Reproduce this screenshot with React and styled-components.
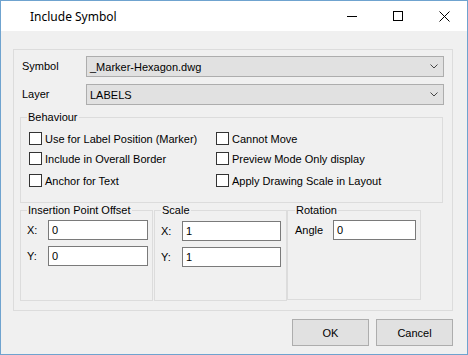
import React from "react";
import styled, { createGlobalStyle } from "styled-components";

const Global = createGlobalStyle`
  html, body { margin: 0; padding: 0; background: #fff; }
  * { box-sizing: border-box; }
`;

const Window = styled.div`
  width: 468px;
  height: 355px;
  border: 1px solid #6fa3cf;
  background: #f0f0f0;
  display: flex;
  flex-direction: column;
  font-family: "Liberation Sans", Arial, sans-serif;
  font-size: 11px;
  color: #000;
`;

const TitleBar = styled.div`
  height: 30px;
  background: #fff;
  display: flex;
  align-items: center;
  flex-shrink: 0;
`;

const Title = styled.div`
  flex: 1;
  padding-left: 29px;
  font-family: "Noto Sans", "Liberation Sans", sans-serif;
  font-size: 12px;
  color: #000;
`;

const CaptionButton = styled.div`
  width: 46px;
  height: 30px;
  display: flex;
  align-items: center;
  justify-content: center;
`;

const Body = styled.div`
  flex: 1;
  padding: 18px 14px 0 12px;
  display: flex;
  flex-direction: column;
`;

const Panel = styled.div`
  height: 262px;
  border: 1px solid #dcdcdc;
  padding: 6px 8px 0 6px;
  display: flex;
  flex-direction: column;
`;

const FieldRow = styled.div`
  display: grid;
  grid-template-columns: 64px 1fr;
  align-items: center;
  padding-left: 2px;
  margin-top: ${(p) => p.$mt || 0}px;
`;

const Label = styled.span`
  line-height: 13px;
  white-space: nowrap;
`;

const Combo = styled.div`
  height: 21px;
  border: 1px solid #adadad;
  background: #e1e1e1;
  display: flex;
  align-items: center;
  padding: 0 5px 0 3px;
`;

const ComboText = styled.span`
  flex: 1;
`;

const Group = styled.fieldset`
  margin: ${(p) => p.$margin || "0"};
  padding: ${(p) => p.$padding || "0"};
  border: 1px solid #dcdcdc;
  width: ${(p) => (p.$width ? p.$width + "px" : "auto")};
  height: ${(p) => p.$height}px;
  min-width: 0;
`;

const Legend = styled.legend`
  padding: 0 1px;
  margin-left: ${(p) => p.$shift || 0}px;
  line-height: 13px;
  font-size: 11px;
`;

const CheckGrid = styled.div`
  display: grid;
  grid-template-columns: 187px 1fr;
  grid-template-rows: 20px 22px 13px;
  align-items: start;
`;

const CheckItem = styled.label`
  display: flex;
  align-items: center;
  height: 13px;
  white-space: nowrap;
`;

const Box = styled.span`
  width: 13px;
  height: 13px;
  border: 1px solid #333;
  background: #fff;
  flex-shrink: 0;
  margin-right: 3px;
`;

const BottomRow = styled.div`
  display: flex;
  margin-top: 1px;
`;

const InputGrid = styled.div`
  display: grid;
  grid-template-columns: ${(p) => p.$labelWidth}px ${(p) => p.$inputWidth}px;
  row-gap: ${(p) => p.$gap || 6}px;
  align-items: center;
`;

const TextBox = styled.input`
  height: 20px;
  width: 100%;
  border: 1px solid #7a7a7a;
  background: #fff;
  padding: 0 0 0 3px;
  font-family: "Liberation Sans", Arial, sans-serif;
  font-size: 11px;
  color: #000;
  outline: none;
  margin: 0;
`;

const ButtonRow = styled.div`
  display: flex;
  justify-content: flex-end;
  gap: 7px;
  margin-top: 8px;
  padding-right: 0;
`;

const Button = styled.button`
  width: 77px;
  height: 27px;
  border: 1px solid #adadad;
  background: #e1e1e1;
  font-family: "Liberation Sans", Arial, sans-serif;
  font-size: 11px;
  color: #000;
  padding: 0;
  margin: 0;
`;

const Chevron = () => (
  <svg width="8" height="5" viewBox="0 0 8 5">
    <polyline points="0.5,0.5 4,4 7.5,0.5" fill="none" stroke="#444" strokeWidth="1" />
  </svg>
);

const Check = ({ children }) => (
  <CheckItem>
    <Box />
    {children}
  </CheckItem>
);

export default function App() {
  return (
    <Window>
      <Global />
      <TitleBar>
        <Title>Include Symbol</Title>
        <CaptionButton>
          <svg width="10" height="10" viewBox="0 0 10 10">
            <line x1="0" y1="5.5" x2="10" y2="5.5" stroke="#000" strokeWidth="1" />
          </svg>
        </CaptionButton>
        <CaptionButton>
          <svg width="10" height="10" viewBox="0 0 10 10">
            <rect x="0.5" y="0.5" width="9" height="9" fill="none" stroke="#000" strokeWidth="1" />
          </svg>
        </CaptionButton>
        <CaptionButton>
          <svg width="11" height="11" viewBox="0 0 11 11">
            <line x1="0.5" y1="0.5" x2="10.5" y2="10.5" stroke="#000" strokeWidth="1" />
            <line x1="10.5" y1="0.5" x2="0.5" y2="10.5" stroke="#000" strokeWidth="1" />
          </svg>
        </CaptionButton>
      </TitleBar>
      <Body>
        <Panel>
          <FieldRow>
            <Label>Symbol</Label>
            <Combo>
              <ComboText>_Marker-Hexagon.dwg</ComboText>
              <Chevron />
            </Combo>
          </FieldRow>
          <FieldRow $mt={7}>
            <Label>Layer</Label>
            <Combo>
              <ComboText>LABELS</ComboText>
              <Chevron />
            </Combo>
          </FieldRow>
          <Group $margin="6px 1px 0 0" $padding="8px 0 0 8px" $height={92}>
            <Legend $shift={-2}>Behaviour</Legend>
            <CheckGrid>
              <Check>Use for Label Position (Marker)</Check>
              <Check>Cannot Move</Check>
              <Check>Include in Overall Border</Check>
              <Check>Preview Mode Only display</Check>
              <Check>Anchor for Text</Check>
              <Check>Apply Drawing Scale in Layout</Check>
            </CheckGrid>
          </Group>
          <BottomRow>
            <Group $margin="0 1px 0 0" $padding="3px 0 0 6px" $width={133} $height={97}>
              <Legend>Insertion Point Offset</Legend>
              <InputGrid $labelWidth={21} $inputWidth={100}>
                <Label>X:</Label>
                <TextBox defaultValue="0" readOnly />
                <Label>Y:</Label>
                <TextBox defaultValue="0" readOnly />
              </InputGrid>
            </Group>
            <Group $padding="4px 0 0 6px" $width={133} $height={97}>
              <Legend>Scale</Legend>
              <InputGrid $labelWidth={21} $inputWidth={99}>
                <Label>X:</Label>
                <TextBox defaultValue="1" readOnly />
                <Label>Y:</Label>
                <TextBox defaultValue="1" readOnly />
              </InputGrid>
            </Group>
            <Group $padding="3px 0 0 7px" $width={134} $height={96}>
              <Legend>Rotation</Legend>
              <InputGrid $labelWidth={38} $inputWidth={83}>
                <Label>Angle</Label>
                <TextBox defaultValue="0" readOnly />
              </InputGrid>
            </Group>
          </BottomRow>
        </Panel>
        <ButtonRow>
          <Button>OK</Button>
          <Button>Cancel</Button>
        </ButtonRow>
      </Body>
    </Window>
  );
}
